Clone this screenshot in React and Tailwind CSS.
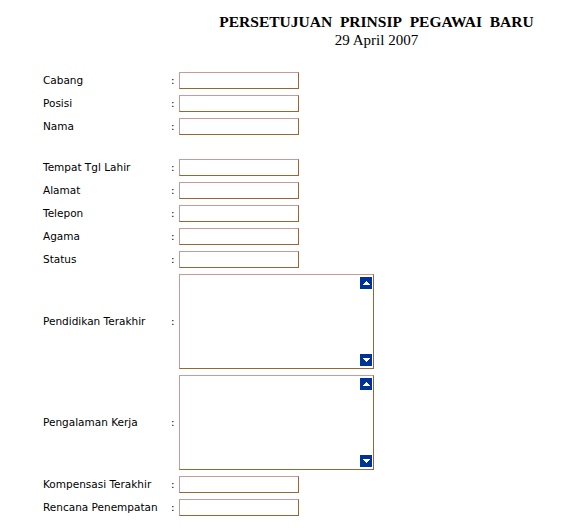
const fields = [
  { label: 'Cabang' },
  { label: 'Posisi' },
  { label: 'Nama' },
  { spacer: true },
  { label: 'Tempat Tgl Lahir' },
  { label: 'Alamat' },
  { label: 'Telepon' },
  { label: 'Agama' },
  { label: 'Status' },
  { label: 'Pendidikan Terakhir', area: true },
  { label: 'Pengalaman Kerja', area: true },
  { label: 'Kompensasi Terakhir' },
  { label: 'Rencana Penempatan' },
];

function ScrollButton({ down }) {
  return (
    <div className="w-[12px] h-[12px] bg-[#003399] flex items-center justify-center">
      <svg width="7" height="4" viewBox="0 0 7 4" shapeRendering="crispEdges">
        {down ? (
          <path d="M0 0H7V1H6V2H5V3H4V4H3V3H2V2H1V1H0Z" fill="#fff" />
        ) : (
          <path d="M3 0H4V1H5V2H6V3H7V4H0V3H1V2H2V1H3Z" fill="#fff" />
        )}
      </svg>
    </div>
  );
}

function Box() {
  return (
    <div className="w-[120px] h-[17px] border border-[#cc9999] border-b-[#996633] border-r-[#996633] bg-white" />
  );
}

function Area() {
  return (
    <div className="w-[195px] h-[95px] border border-[#cc9999] border-b-[#996633] border-r-[#996633] bg-white flex justify-end pt-[2px] pb-[2px] pr-[1px]">
      <div className="flex flex-col justify-between">
        <ScrollButton />
        <ScrollButton down />
      </div>
    </div>
  );
}

export default function App() {
  return (
    <div className="w-[583px] h-[530px] bg-white pt-[12px] pl-[43px]" style={{ fontFamily: '"DejaVu Sans", Verdana, sans-serif' }}>
      <div className="ml-[127px] text-center leading-[19px]" style={{ fontFamily: '"Liberation Serif", "Times New Roman", serif' }}>
        <div className="text-[15.5px] font-bold text-black">PERSETUJUAN&nbsp; PRINSIP&nbsp; PEGAWAI&nbsp; BARU</div>
        <div className="text-[15px] text-black">29 April 2007</div>
      </div>

      <div className="mt-[22px] flex flex-col gap-[6px] text-[10.5px] text-black">
        {fields.map((f, i) =>
          f.spacer ? (
            <div key={i} className="h-[12px]" />
          ) : (
            <div key={i} className="flex items-center">
              <div className="w-[128px]">{f.label}</div>
              <div className="w-[8px]">:</div>
              {f.area ? <Area /> : <Box />}
            </div>
          )
        )}
      </div>
    </div>
  );
}
